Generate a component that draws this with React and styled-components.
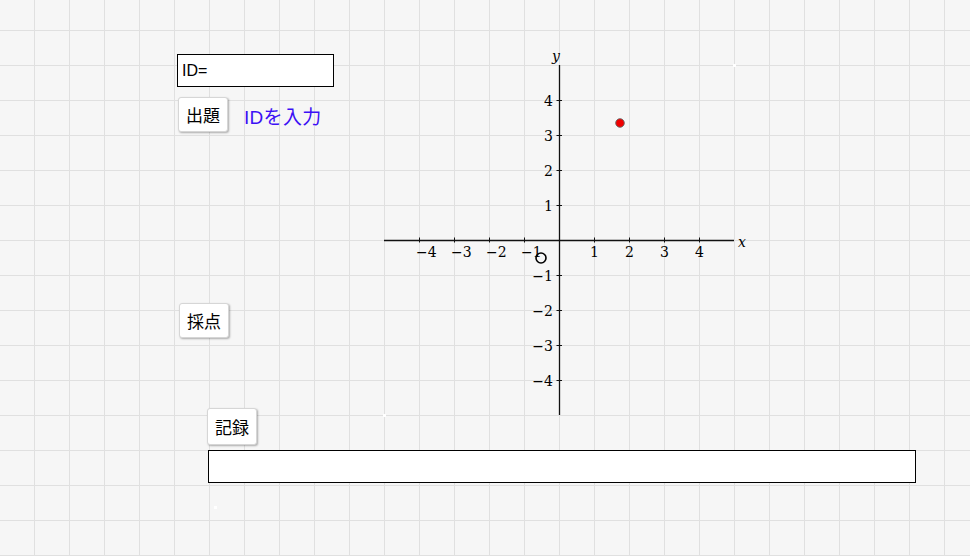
import React from 'react';
import styled, { createGlobalStyle } from 'styled-components';

const GlobalStyle = createGlobalStyle`
  html, body {
    margin: 0;
    padding: 0;
    background: #f6f6f6;
  }
`;

const UI_FONT = `"Liberation Sans", "Noto Sans CJK JP", sans-serif`;
const UNIT = 35;
const ORIGIN = { x: 559, y: 240 };

// graphics view: the grid lines sit on the same 35px raster as the axes
const Canvas = styled.div`
  position: relative;
  width: 970px;
  height: 556px;
  overflow: hidden;
  background-color: #f6f6f6;
  background-image:
    linear-gradient(to right, #e0e0e0 1px, transparent 1px),
    linear-gradient(to bottom, #e0e0e0 1px, transparent 1px);
  background-size: ${UNIT}px ${UNIT}px;
  background-position: 34px 30px;
  font-family: ${UI_FONT};
`;

const Plot = styled.svg`
  position: absolute;
  inset: 0;
`;

const MathText = styled.text`
  font-family: "DejaVu Serif", "Liberation Serif", serif;
  font-size: 14px;
  font-style: ${p => (p.$italic ? 'italic' : 'normal')};
  fill: #000;
`;

// widgets of the applet are placed at their coordinates on the canvas
const Widget = styled.div`
  position: absolute;
  left: ${p => p.$x}px;
  top: ${p => p.$y}px;
`;

const InputBox = styled.div`
  box-sizing: border-box;
  width: ${p => p.$w}px;
  height: ${p => p.$h}px;
  background: #fff;
  border: 1px solid #000;
  display: flex;
  align-items: center;
  padding: 0 4px;
  font-size: 16px;
  color: #000;
`;

const Button = styled.button`
  box-sizing: border-box;
  width: 50px;
  height: ${p => p.$h || 35}px;
  padding: 0;
  background: #fff;
  border: 1px solid #d6d6d6;
  border-radius: 3px;
  box-shadow: 1px 1px 2px rgba(0, 0, 0, 0.3);
  font-family: ${UI_FONT};
  font-size: 17px;
  color: #000;
  display: flex;
  align-items: center;
  justify-content: center;
`;

const Caption = styled.span`
  font-size: 19px;
  color: #3c10f5;
  letter-spacing: 0.3px;
`;

function Axes() {
  const ticks = [-4, -3, -2, -1, 1, 2, 3, 4];
  const left = ORIGIN.x - 5 * UNIT;
  const right = ORIGIN.x + 5 * UNIT;
  const top = ORIGIN.y - 5 * UNIT;
  const bottom = ORIGIN.y + 5 * UNIT;
  return (
    <g>
      <line x1={left} y1={ORIGIN.y + 0.5} x2={right} y2={ORIGIN.y + 0.5} stroke="#111" strokeWidth="1.3" />
      <line x1={ORIGIN.x + 0.5} y1={top} x2={ORIGIN.x + 0.5} y2={bottom} stroke="#111" strokeWidth="1.3" />
      {ticks.map(t => {
        const x = ORIGIN.x + t * UNIT + 0.5;
        const y = ORIGIN.y - t * UNIT + 0.5;
        const label = t < 0 ? `−${-t}` : `${t}`;
        return (
          <g key={t}>
            <line x1={x} y1={ORIGIN.y - 2.5} x2={x} y2={ORIGIN.y + 2.5} stroke="#111" />
            <line x1={ORIGIN.x - 2.5} y1={y} x2={ORIGIN.x + 3} y2={y} stroke="#111" />
            <MathText
              x={t < 0 ? x - 3.5 : x}
              y={ORIGIN.y + 17}
              textAnchor={t < 0 ? 'start' : 'middle'}
            >
              {label}
            </MathText>
            <MathText x={ORIGIN.x - 6} y={y + 5} textAnchor="end">
              {label}
            </MathText>
          </g>
        );
      })}
      <MathText $italic x={right + 4} y={ORIGIN.y + 7}>x</MathText>
      <MathText $italic x={ORIGIN.x - 7} y={top - 4}>y</MathText>
    </g>
  );
}

export default function App() {
  return (
    <>
      <GlobalStyle />
      <Canvas>
        <Plot width="970" height="556" viewBox="0 0 970 556">
          <Axes />
          <circle cx="620" cy="123" r="4.3" fill="#f00000" stroke="#666" strokeWidth="0.9" />
          <circle cx="541" cy="258" r="5" fill="none" stroke="#000" strokeWidth="1.6" />
          <rect x="733" y="64" width="3" height="3" fill="#fff" />
          <rect x="383" y="414" width="3" height="3" fill="#fff" />
          <rect x="214" y="506" width="3" height="3" fill="#fff" />
        </Plot>

        <Widget $x={177} $y={54}>
          <InputBox $w={157} $h={33}>ID=</InputBox>
        </Widget>
        <Widget $x={178} $y={97}>
          <Button>出題</Button>
        </Widget>
        <Widget $x={244} $y={102}>
          <Caption>IDを入力</Caption>
        </Widget>
        <Widget $x={179} $y={303}>
          <Button>採点</Button>
        </Widget>
        <Widget $x={207} $y={408}>
          <Button $h={37}>記録</Button>
        </Widget>
        <Widget $x={208} $y={450}>
          <InputBox $w={708} $h={33} />
        </Widget>
      </Canvas>
    </>
  );
}
